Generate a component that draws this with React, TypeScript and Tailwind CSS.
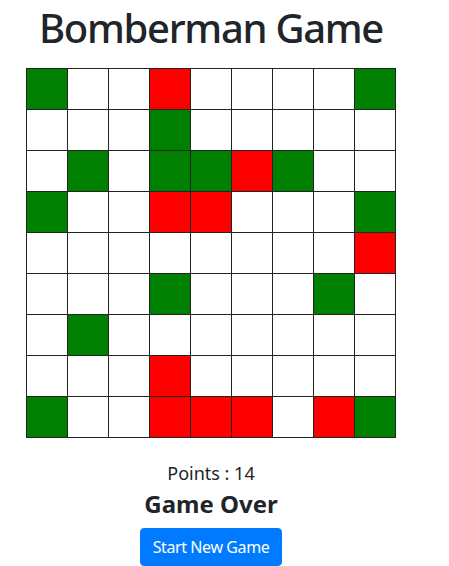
const board = [
  "GWWRWWWWG",
  "WWWGWWWWW",
  "WGWGGRGWW",
  "GWWRRWWWG",
  "WWWWWWWWR",
  "WWWGWWWGW",
  "WGWWWWWWW",
  "WWWRWWWWW",
  "GWWRRRWRG",
];

function Cell({ kind }: { kind: string }) {
  const color =
    kind === "G" ? "bg-[#008000]" : kind === "R" ? "bg-[#ff0000]" : "bg-white";
  return <td className={`w-[41px] h-[41px] p-0 border border-[#222] ${color}`} />;
}

export default function App() {
  return (
    <div className="w-[422px] flex flex-col items-center text-center text-[#212529] font-['Noto_Sans',sans-serif]">
      <h1 className="text-[40px] leading-[1.2] font-medium tracking-[-1.3px] mt-[4px] mb-[16px]">Bomberman Game</h1>
      <table className="border-collapse">
        <tbody>
          {board.map((row, r) => (
            <tr key={r}>
              {row.split("").map((k, c) => (
                <Cell key={c} kind={k} />
              ))}
            </tr>
          ))}
        </tbody>
      </table>
      <p className="text-[18px] leading-[1.5] mt-[22px]">Points : 14</p>
      <h4 className="text-[24px] leading-[1.2] font-bold mt-[3px]">Game Over</h4>
      <button className="mt-[9px] bg-[#007bff] border border-[#007bff] text-white text-[16px] leading-[1.5] tracking-[-0.4px] px-3 py-[6px] rounded-[4px]">
        Start New Game
      </button>
    </div>
  );
}
